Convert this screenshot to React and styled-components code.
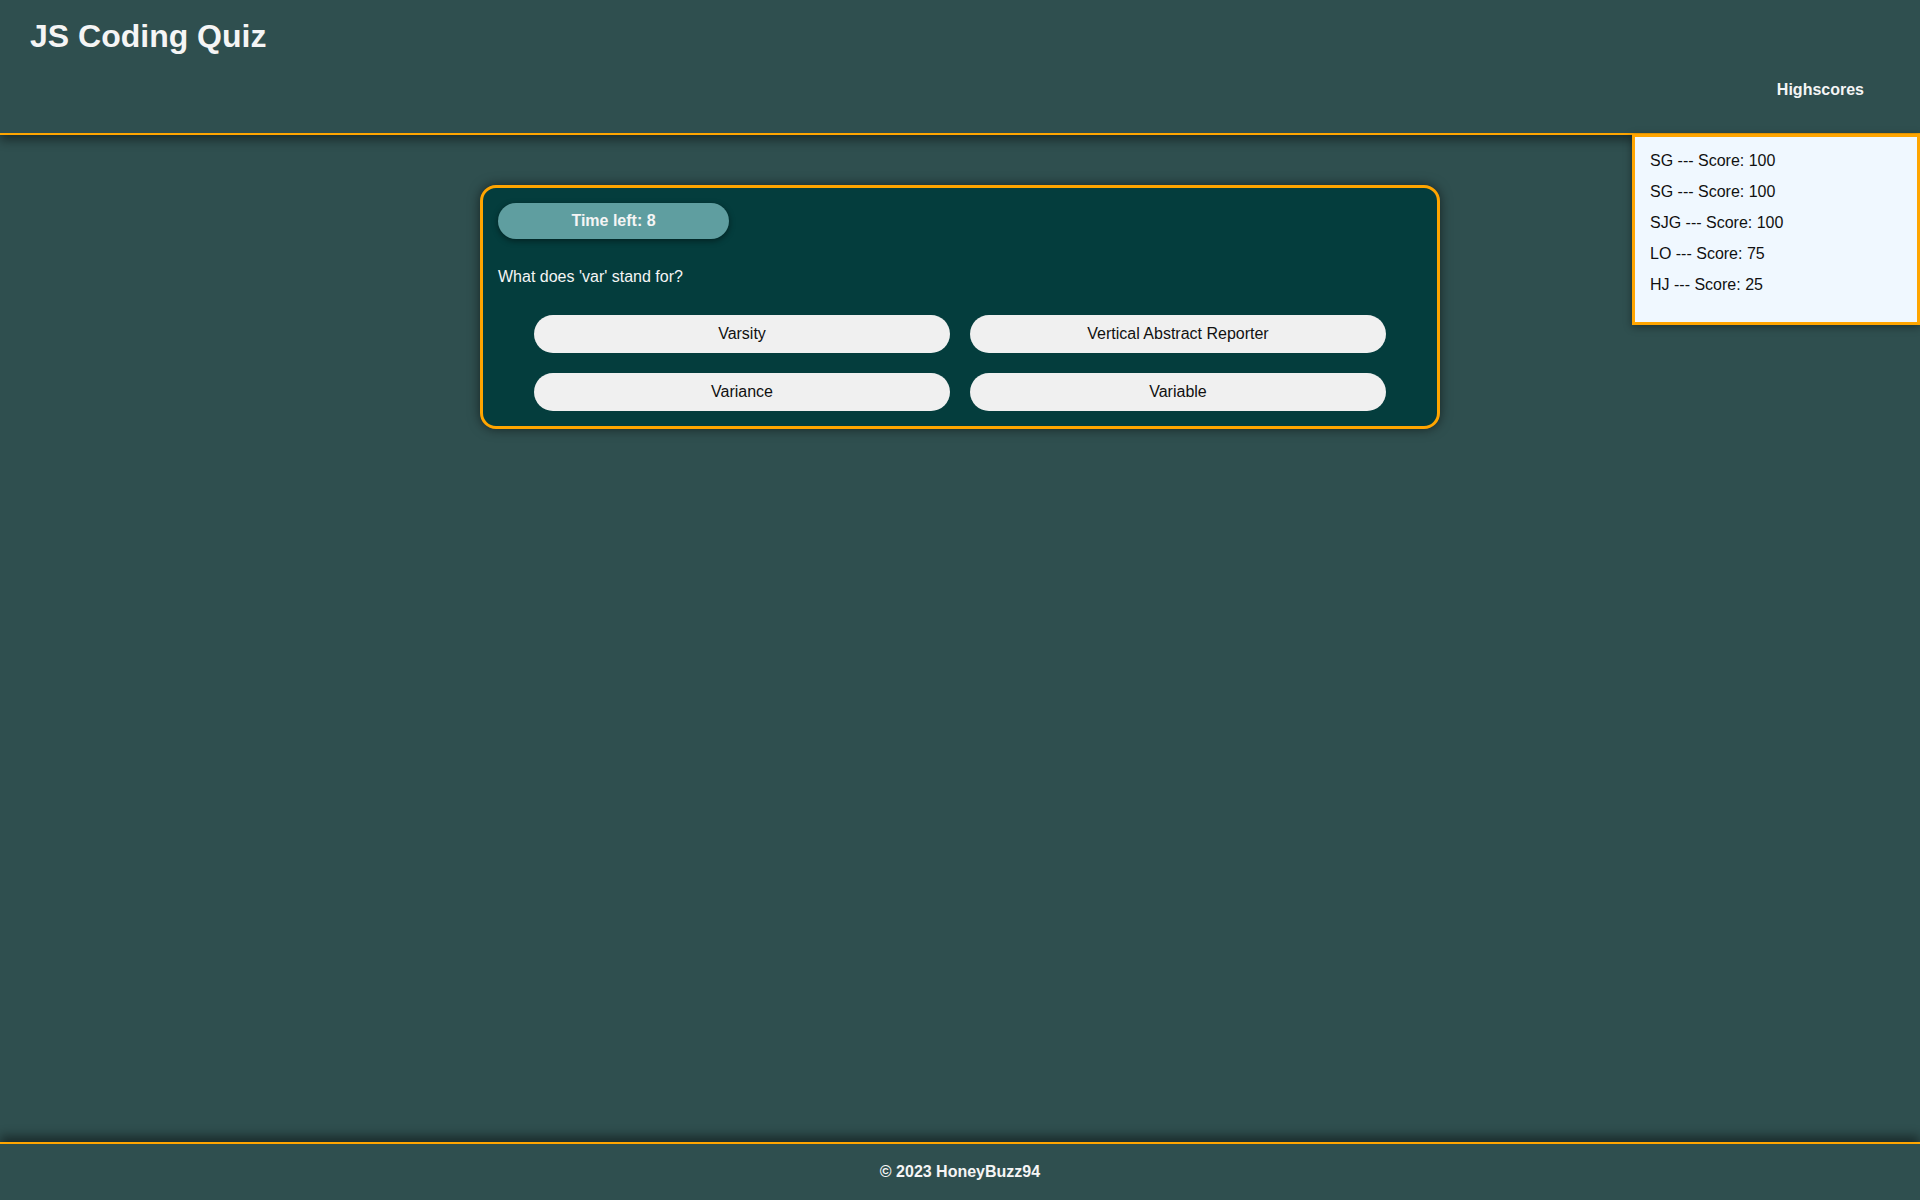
import React from 'react';
import styled, { createGlobalStyle } from 'styled-components';

const scores = [
    { name: 'SG', score: 100 },
    { name: 'SG', score: 100 },
    { name: 'SJG', score: 100 },
    { name: 'LO', score: 75 },
    { name: 'HJ', score: 25 },
];

const choices = ['Varsity', 'Vertical Abstract Reporter', 'Variance', 'Variable'];

function App() {
    return (
        <>
            <GlobalStyle />
            <StPage>
                <StHeader>
                    <StTitle>JS Coding Quiz</StTitle>
                    <StNav>
                        <StNavLink href="#">Highscores</StNavLink>
                    </StNav>
                    <StScoreList>
                        {scores.map((s, i) => (
                            <StScoreItem key={i}>
                                {s.name} --- Score: {s.score}
                            </StScoreItem>
                        ))}
                    </StScoreList>
                </StHeader>

                <StMain>
                    <StQuizCard>
                        <StTimer>Time left: 8</StTimer>
                        <StQuestion>What does 'var' stand for?</StQuestion>
                        <StChoices>
                            {choices.map((c) => (
                                <StChoice key={c}>{c}</StChoice>
                            ))}
                        </StChoices>
                    </StQuizCard>
                </StMain>

                <StFooter>© 2023 HoneyBuzz94</StFooter>
            </StPage>
        </>
    );
}

export default App;

const GlobalStyle = createGlobalStyle`
    html, body {
        margin: 0;
        padding: 0;
        background-color: #2f4f4f;
        font-family: "Liberation Sans", Arial, sans-serif;
    }
    * {
        box-sizing: border-box;
    }
`;

const StPage = styled.div`
    min-height: 100vh;
    display: flex;
    flex-direction: column;
`;

const StHeader = styled.header`
    position: relative;
    height: 135px;
    padding: 18px 56px 0 30px;
    display: flex;
    justify-content: space-between;
    align-items: flex-start;
    border-bottom: 2px solid #ffa500;
    box-shadow: 0 5px 10px rgba(0, 0, 0, 0.45);
    z-index: 1;
`;

const StTitle = styled.h1`
    margin: 0;
    font-size: 32px;
    line-height: 37px;
    font-weight: 700;
    color: #f5f5f5;
`;

const StNav = styled.nav`
    margin-top: 63px;
`;

const StNavLink = styled.a`
    font-size: 16px;
    line-height: 18px;
    font-weight: 700;
    color: #f5f5f5;
    text-decoration: none;
`;

const StScoreList = styled.ul`
    position: absolute;
    top: 134px;
    right: 0;
    width: 288px;
    height: 191px;
    margin: 0;
    padding: 8px 15px 22px;
    list-style: none;
    background-color: #f0f8ff;
    border: 3px solid #ffa500;
    box-shadow: 0 2px 8px rgba(0, 0, 0, 0.4);
`;

const StScoreItem = styled.li`
    font-size: 16px;
    line-height: 31px;
    color: #111;
`;

const StMain = styled.main`
    flex: 1;
    padding-top: 50px;
`;

const StQuizCard = styled.section`
    width: 960px;
    margin: 0 auto;
    padding: 15px 15px 15px;
    background-color: #043d3d;
    border: 3px solid #ffa500;
    border-radius: 16px;
    box-shadow: 0 0 12px rgba(0, 0, 0, 0.55);
`;

const StTimer = styled.div`
    width: 231px;
    height: 36px;
    border-radius: 18px;
    background-color: #5f9ea0;
    color: #f5f5f5;
    font-size: 16px;
    font-weight: 700;
    display: flex;
    align-items: center;
    justify-content: center;
    box-shadow: 0 2px 6px rgba(0, 0, 0, 0.45);
`;

const StQuestion = styled.p`
    margin: 29px 0 29px;
    font-size: 16px;
    line-height: 18px;
    color: #f5f5f5;
`;

const StChoices = styled.div`
    display: grid;
    grid-template-columns: repeat(2, 416px);
    gap: 20px;
    justify-content: center;
`;

const StChoice = styled.button`
    height: 38px;
    border: none;
    border-radius: 19px;
    background-color: #f0f0f0;
    color: #111;
    font-family: "Liberation Sans", Arial, sans-serif;
    font-size: 16px;
    cursor: pointer;
`;

const StFooter = styled.footer`
    height: 58px;
    display: flex;
    align-items: center;
    justify-content: center;
    border-top: 2px solid #ffa500;
    box-shadow: 0 -6px 10px rgba(0, 0, 0, 0.45);
    color: #f5f5f5;
    font-size: 16px;
    font-weight: 700;
`;
